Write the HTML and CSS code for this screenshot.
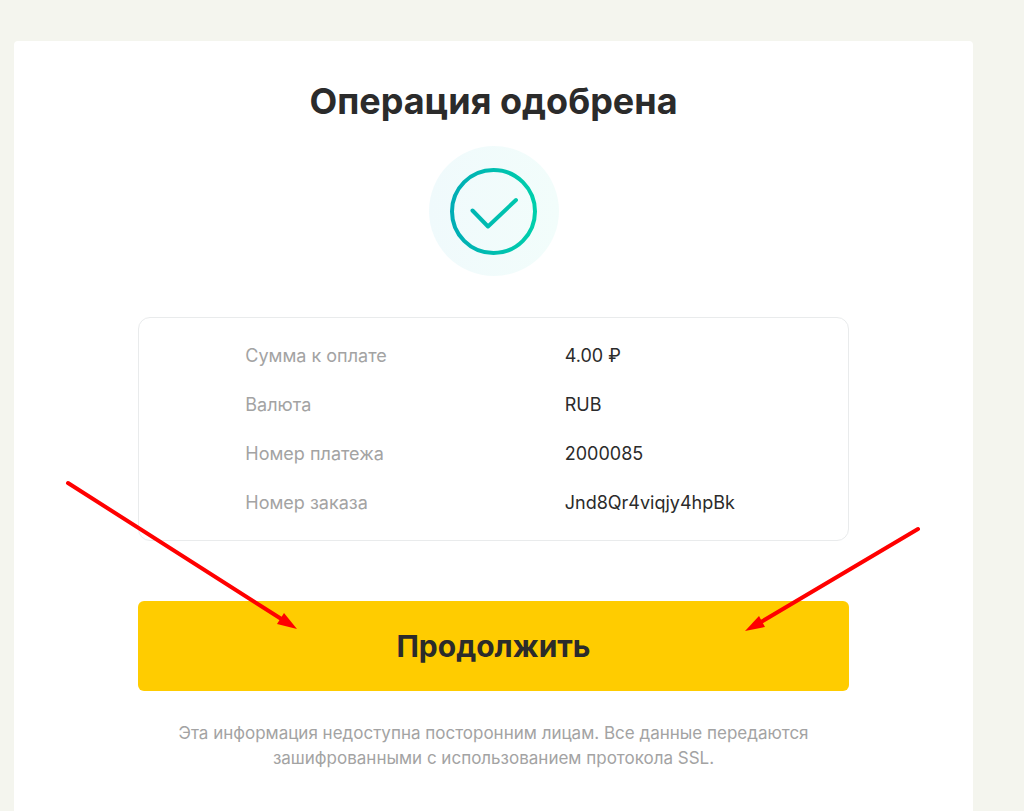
FILE: index.html
```html
<!DOCTYPE html>
<html lang="ru">
<head>
    <meta charset="UTF-8">
    <meta name="viewport" content="width=device-width, initial-scale=1.0">
    <title>Операция одобрена</title>
    <link rel="stylesheet" href="styles.css">
</head>
<body>
    <main class="card">
        <h1 class="title">Операция одобрена</h1>

        <svg class="status" viewBox="0 0 130 130" aria-hidden="true">
            <defs>
                <linearGradient id="ring" gradientUnits="userSpaceOnUse" x1="22" y1="0" x2="109" y2="0">
                    <stop offset="0" stop-color="#00adb5"/>
                    <stop offset="1" stop-color="#00d0ab"/>
                </linearGradient>
                <linearGradient id="halo" x1="0" y1="0" x2="1" y2="0">
                    <stop offset="0" stop-color="#f0fafc"/>
                    <stop offset="1" stop-color="#f2fdfb"/>
                </linearGradient>
            </defs>
            <circle cx="65" cy="65" r="65" fill="url(#halo)"/>
            <g fill="none" stroke="url(#ring)" stroke-width="4" stroke-linecap="round" stroke-linejoin="round">
                <circle cx="64.5" cy="65.5" r="41.5"/>
                <path d="M43.5 64.5l15.5 16 28-26.500"/>
            </g>
        </svg>

        <div class="details">
            <table class="details-table">
                <tr><th scope="row">Сумма к оплате</th><td>4.00 ₽</td></tr>
                <tr><th scope="row">Валюта</th><td>RUB</td></tr>
                <tr><th scope="row">Номер платежа</th><td>2000085</td></tr>
                <tr><th scope="row">Номер заказа</th><td>Jnd8Qr4viqjy4hpBk</td></tr>
            </table>
        </div>

        <button class="continue" type="button">Продолжить</button>

        <p class="note">Эта информация недоступна посторонним лицам. Все данные передаются зашифрованными с использованием протокола SSL.</p>

        <!-- arrows pointing at the button -->
        <svg class="arrow arrow-left" viewBox="0 0 234 152" aria-hidden="true">
            <path class="arrow-line" d="M3 3l215 137"/>
            <path class="arrow-head" d="M232 149l-20-5 7-11z"/>
        </svg>
        <svg class="arrow arrow-right" viewBox="0 0 178 108" aria-hidden="true">
            <path class="arrow-line" d="M175 3L18 96"/>
            <path class="arrow-head" d="M2 105l14-15 6 11z"/>
        </svg>
    </main>
</body>
</html>
```
FILE: styles.css
```css
* {
    margin: 0;
    padding: 0;
    box-sizing: border-box;
}
body {
    display: flex;
    min-height: 100vh;
    padding: 41px 51px 0 14px;
    background-color: #f4f5ee;
    font-family: Inter, "Noto Sans", sans-serif;
    color: #2b2b2b;
}

.card {
    position: relative;
    flex-grow: 1;
    padding: 36px 124px 40px;
    border-radius: 4px 4px 0 0;
    background-color: #fff;
    text-align: center;
}
.title {
    font-size: 36px;
    line-height: 48px;
}
.status {
    display: block;
    width: 130px;
    height: 130px;
    margin: 21px auto 41px;
}

.details {
    padding: 13px 0;
    border: 1px solid #e9ebec;
    border-radius: 12px;
}
.details-table {
    width: 85%;
    margin-left: 15%;
    border-collapse: collapse;
    table-layout: fixed;
    font-size: 18px;
    line-height: 25px;
    text-align: left;
}
.details-table th {
    width: 53%;
    color: #a3a3a3;
    font-weight: 400;
}
.details-table th,
.details-table td {
    padding: 12px 0;
}

.continue {
    display: block;
    width: 100%;
    height: 90px;
    margin-top: 60px;
    border: 0;
    border-radius: 6px;
    background-color: #ffcc00;
    color: #2b2b2b;
    font: 700 30px Inter, "Noto Sans", sans-serif;
    cursor: pointer;
}
.note {
    margin-top: 30px;
    padding: 0 32px;
    color: #a3a3a3;
    font-size: 17px;
    line-height: 25px;
}

.arrow {
    position: absolute;
    pointer-events: none;
}
.arrow-left {
    top: 439px;
    left: 51px;
    width: 234px;
}
.arrow-right {
    top: 485px;
    right: 52px;
    width: 178px;
}
.arrow-line {
    fill: none;
    stroke: #f00;
    stroke-width: 4;
    stroke-linecap: round;
}
.arrow-head {
    fill: #f00;
}
```
